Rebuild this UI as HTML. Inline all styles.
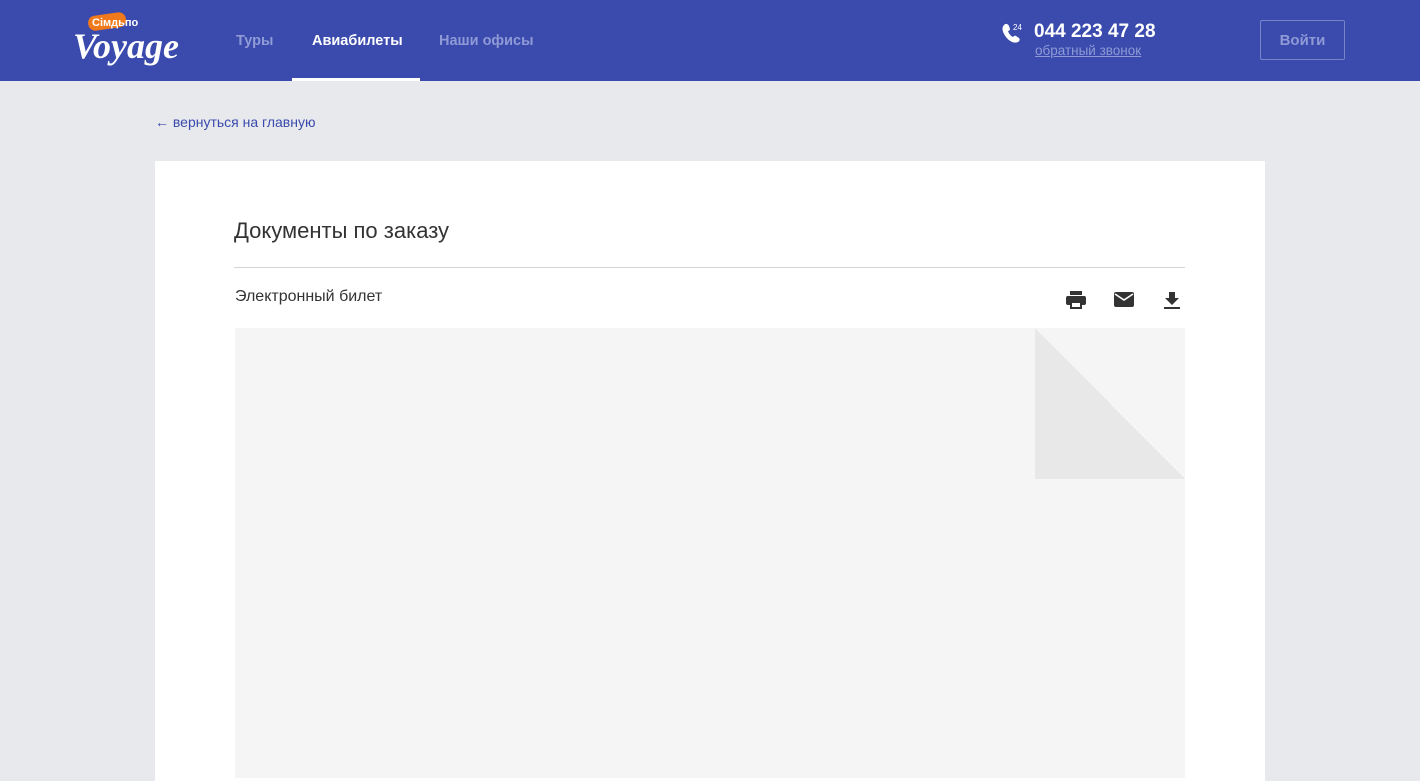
<!DOCTYPE html>
<html><head><meta charset="utf-8"><style>
*{margin:0;padding:0;box-sizing:border-box}
body{width:1420px;height:770px;overflow:hidden;background:#e8e9ed;font-family:"Liberation Sans",sans-serif;position:relative}
.hdr{position:absolute;left:0;top:0;width:1420px;height:81px;background:#3a4aad}
.nav{position:absolute;top:33px;font-size:14.5px;font-weight:bold;color:#8f9ad6}
.act{color:#fff}
.ul{position:absolute;left:292px;top:78px;width:128px;height:3px;background:#fff}
.phone{position:absolute;left:1034px;top:21px;color:#fff;font-size:19px;font-weight:bold}
.cb{position:absolute;left:1035px;top:43px;color:#8f9ad6;font-size:13.5px;text-decoration:underline}
.btn{position:absolute;left:1260px;top:20px;width:85px;height:40px;border:1px solid #7884c9;border-radius:2px;color:#8f9ad6;font-size:15px;font-weight:bold;text-align:center;line-height:40px}
.back{position:absolute;left:155px;top:114px;color:#3a4aad;font-size:14px}
.card{position:absolute;left:155px;top:161px;width:1110px;height:620px;background:#fff}
h1{position:absolute;left:234px;top:218px;font-size:22px;font-weight:normal;color:#333}
.line{position:absolute;left:234px;top:267px;width:951px;height:1px;background:#d5d5d5}
.et{position:absolute;left:235px;top:288px;font-size:16px;color:#333}
.doc{position:absolute;left:235px;top:328px;width:950px;height:450px;background:#f5f5f5}
.fold{position:absolute;left:1035px;top:328px;width:150px;height:151px;background:linear-gradient(to top right,#e8e8e8 50%,#f5f5f5 50%)}
</style></head><body>
<div class="hdr"></div>
<svg style="position:absolute;left:70px;top:8px" width="120" height="64" viewBox="0 0 120 64">
<rect x="18" y="6" width="38" height="15" rx="7" fill="#f07a1b" transform="rotate(-8 37 13)"/>
<text x="22" y="18" font-size="11" font-weight="bold" fill="#fff" font-family="Liberation Sans">Cімдьпо</text>
<text x="3" y="50" font-size="36" font-weight="bold" font-style="italic" fill="#fff" font-family="Liberation Serif">Voyage</text>
</svg>
<div class="nav" style="left:236px">Туры</div>
<div class="nav act" style="left:312px">Авиабилеты</div>
<div class="nav" style="left:439px">Наши офисы</div>
<div class="ul"></div>
<svg style="position:absolute;left:1001px;top:22px" width="24" height="22" viewBox="0 0 24 22"><path d="M3 3c2-2 4-1 5 1l1 3c0 1-1 2-2 2 1 3 3 5 5 6 1-1 2-2 3-1l3 2c1 1 1 3-1 4-4 2-9-1-12-5S0 6 3 3z" fill="#fff"/><text x="12" y="8" font-size="8" fill="#fff" font-family="Liberation Sans">24</text></svg>
<div class="phone">044 223 47 28</div>
<div class="cb">обратный звонок</div>
<div class="btn">Войти</div>
<div class="back">← вернуться на главную</div>
<div class="card"></div>
<h1>Документы по заказу</h1>
<div class="line"></div>
<div class="et">Электронный билет</div>
<svg style="position:absolute;left:1065px;top:290px" width="22" height="20" viewBox="0 0 22 20"><rect x="5" y="1" width="12" height="4" fill="#333"/><rect x="1" y="6" width="20" height="9" rx="2" fill="#333"/><rect x="5" y="12" width="12" height="7" fill="#333"/><rect x="7" y="13" width="8" height="4" fill="#fff"/></svg>
<svg style="position:absolute;left:1113px;top:291px" width="22" height="17" viewBox="0 0 22 17"><rect x="1" y="1" width="20" height="15" rx="2" fill="#333"/><path d="M2 3l9 6 9-6" stroke="#fff" stroke-width="1.6" fill="none"/></svg>
<svg style="position:absolute;left:1162px;top:290px" width="20" height="20" viewBox="0 0 20 20"><path d="M7 2h6v6h4l-7 7-7-7h4z" fill="#333"/><rect x="2" y="17" width="16" height="2" fill="#333"/></svg>
<div class="doc"></div>
<div class="fold"></div>
</body></html>
